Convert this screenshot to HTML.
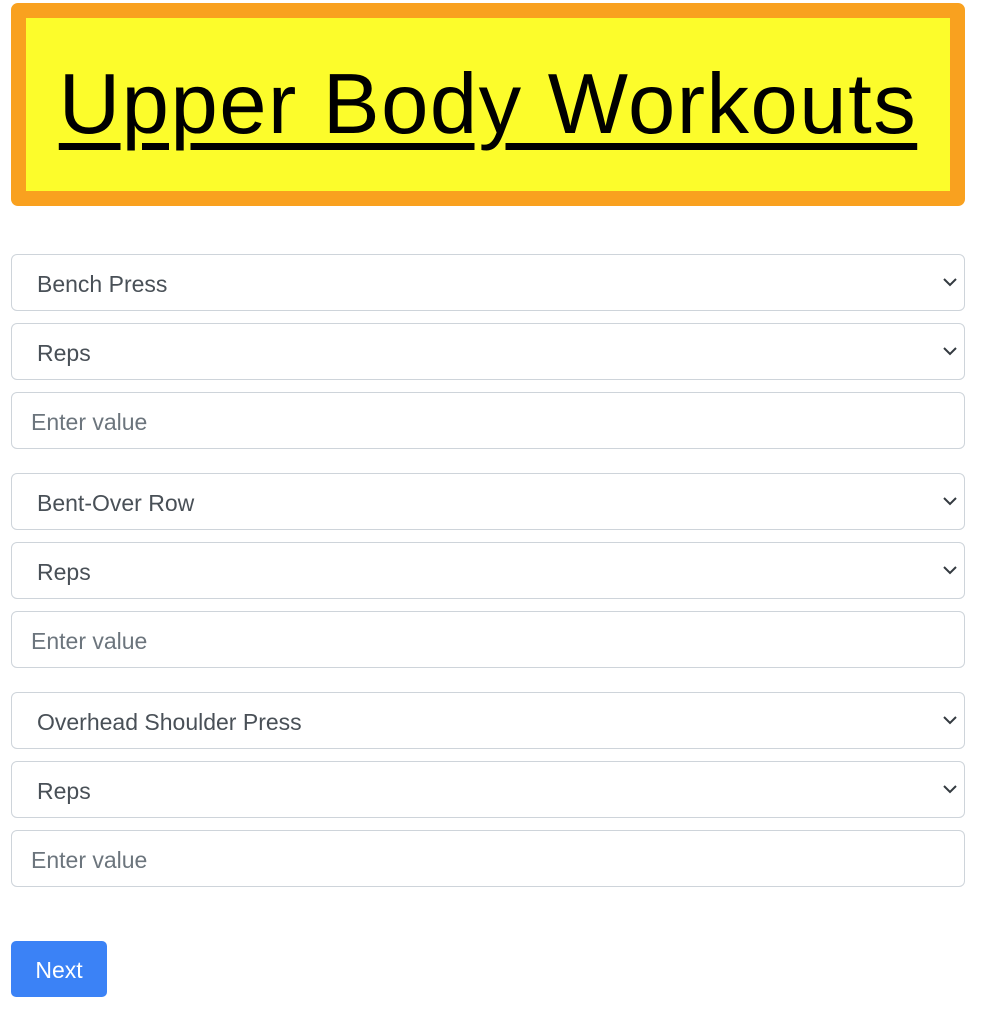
<!DOCTYPE html>
<html><head><style>
body{margin:0;background:#fff;font-family:"Comic Sans MS","Liberation Sans",sans-serif;}
.hdr{position:absolute;left:11px;top:3px;width:924px;height:173px;border:15px solid #f9a11f;border-radius:7px;background:#fcfc2b;text-align:center;}
.hdr h1{margin:0;font-weight:normal;font-size:85px;line-height:173px;color:#000;text-decoration:underline;text-decoration-thickness:7px;text-underline-offset:10px;letter-spacing:1.5px;}
.f{position:absolute;left:11px;width:952px;height:55px;border:1px solid #ced4da;border-radius:6px;box-sizing:content-box;font-size:23px;color:#495057;line-height:59px;}
.s span{position:absolute;left:25px}
.i span{position:absolute;left:19px;color:#6c757d}
.s svg{position:absolute;right:6px;top:22px}
.btn{position:absolute;left:11px;top:941px;width:96px;height:56px;background:#3b82f6;border-radius:5px;color:#fff;font-size:23px;line-height:58px;text-align:center;}
</style></head><body>
<div class="hdr"><h1>Upper Body Workouts</h1></div>
<div class="f s" style="top:254px"><span>Bench Press</span><svg width="16" height="10" viewBox="0 0 16 10"><path d="M2 2l6 6 6-6" fill="none" stroke="#343a40" stroke-width="2"/></svg></div>
<div class="f s" style="top:323px"><span>Reps</span><svg width="16" height="10" viewBox="0 0 16 10"><path d="M2 2l6 6 6-6" fill="none" stroke="#343a40" stroke-width="2"/></svg></div>
<div class="f i" style="top:392px"><span>Enter value</span></div>
<div class="f s" style="top:473px"><span>Bent-Over Row</span><svg width="16" height="10" viewBox="0 0 16 10"><path d="M2 2l6 6 6-6" fill="none" stroke="#343a40" stroke-width="2"/></svg></div>
<div class="f s" style="top:542px"><span>Reps</span><svg width="16" height="10" viewBox="0 0 16 10"><path d="M2 2l6 6 6-6" fill="none" stroke="#343a40" stroke-width="2"/></svg></div>
<div class="f i" style="top:611px"><span>Enter value</span></div>
<div class="f s" style="top:692px"><span>Overhead Shoulder Press</span><svg width="16" height="10" viewBox="0 0 16 10"><path d="M2 2l6 6 6-6" fill="none" stroke="#343a40" stroke-width="2"/></svg></div>
<div class="f s" style="top:761px"><span>Reps</span><svg width="16" height="10" viewBox="0 0 16 10"><path d="M2 2l6 6 6-6" fill="none" stroke="#343a40" stroke-width="2"/></svg></div>
<div class="f i" style="top:830px"><span>Enter value</span></div>
<div class="btn">Next</div>
</body></html>
